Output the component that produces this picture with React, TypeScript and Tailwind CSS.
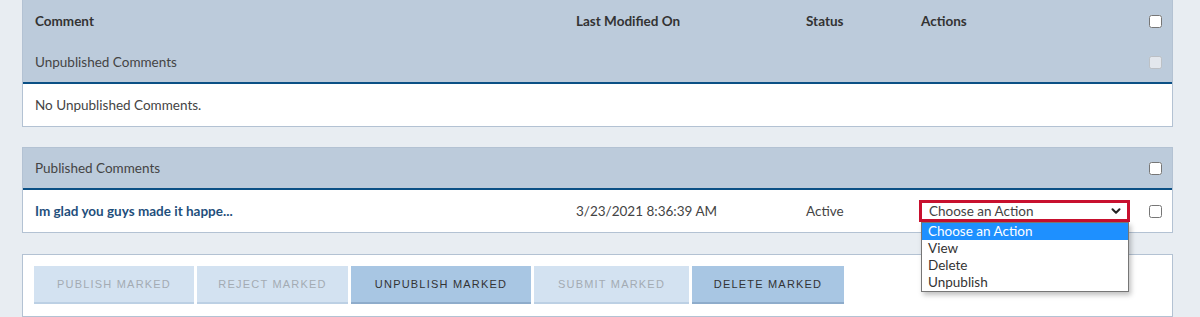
import { ChevronDown } from 'lucide-react';

const font = { fontFamily: 'Lato, "Noto Sans", sans-serif' };

const gridCols = 'grid grid-cols-[541px_230px_115px_1fr_13px] items-center pl-3 pr-[10px]';

function Checkbox({ disabled }: { disabled?: boolean }) {
  return (
    <input
      type="checkbox"
      disabled={disabled}
      className="m-0 h-[13px] w-[13px]"
      readOnly
    />
  );
}

function ActionSelect() {
  return (
    <div className="relative -ml-[2px] w-[211px]">
      <div className="flex h-[22px] items-center justify-between border-[3px] border-[#c8102e] bg-white pl-[7px] pr-[4px] text-[13.5px] text-[#444]">
        <span>Choose an Action</span>
        <ChevronDown className="h-[14px] w-[14px] text-[#222]" strokeWidth={3.5} />
      </div>
      <ul className="absolute left-[2px] top-full z-10 w-[208px] border border-[#767676] bg-white text-[13.5px] leading-[17px] text-[#333] shadow-[2px_3px_5px_rgba(0,0,0,0.25)]">
        <li className="bg-[#1e90ff] pl-[6px] text-white">Choose an Action</li>
        <li className="pl-[6px]">View</li>
        <li className="pl-[6px]">Delete</li>
        <li className="pl-[6px]">Unpublish</li>
      </ul>
    </div>
  );
}

const buttons = [
  { label: 'PUBLISH MARKED', on: false, w: 'w-[160px]' },
  { label: 'REJECT MARKED', on: false, w: 'w-[151px]' },
  { label: 'UNPUBLISH MARKED', on: true, w: 'w-[180px]' },
  { label: 'SUBMIT MARKED', on: false, w: 'w-[155px]' },
  { label: 'DELETE MARKED', on: true, w: 'w-[152px]' },
];

export default function App() {
  return (
    <div className="min-h-[317px] bg-[#e8edf2] px-[22px] pr-[27px]" style={font}>
      {/* unpublished table */}
      <div className="border border-t-0 border-[#b3c2d3] bg-white">
        <div className={`${gridCols} h-[42px] bg-[#bccbdb] text-[13.5px] font-bold text-[#333]`}>
          <span>Comment</span>
          <span>Last Modified On</span>
          <span>Status</span>
          <span>Actions</span>
          <Checkbox />
        </div>
        <div className={`${gridCols} h-[42px] border-b-2 border-[#0b5085] bg-[#bccbdb] text-[13.5px] text-[#444]`}>
          <span className="col-span-4">Unpublished Comments</span>
          <Checkbox disabled />
        </div>
        <div className="flex h-[42px] items-center pl-3 text-[13.5px] text-[#444]">No Unpublished Comments.</div>
      </div>

      {/* published table */}
      <div className="mt-[20px] border border-[#b3c2d3] bg-white">
        <div className={`${gridCols} h-[42px] border-b-2 border-[#0b5085] bg-[#bccbdb] text-[13.5px] text-[#444]`}>
          <span className="col-span-4">Published Comments</span>
          <Checkbox />
        </div>
        <div className={`${gridCols} h-[42px] text-[13.5px] text-[#444]`}>
          <span className="font-bold text-[#1f4f7c]">Im glad you guys made it happe...</span>
          <span>3/23/2021 8:36:39 AM</span>
          <span>Active</span>
          <ActionSelect />
          <Checkbox />
        </div>
      </div>

      {/* bulk buttons */}
      <div className="mt-[21px] flex h-[63px] gap-[3px] border border-[#b3c2d3] bg-white pl-[11px] pt-[11px]">
        {buttons.map((b) => (
          <button
            key={b.label}
            className={`${b.w} h-[38px] border-b-2 text-[11px] tracking-[1.2px] ${
              b.on
                ? 'border-[#8eaccb] bg-[#a8c6e3] text-[#333]'
                : 'border-[#bcd0e4] bg-[#d3e2f1] text-[#a3abb3]'
            }`}
            style={{ fontFamily: '"Liberation Sans", Arial, sans-serif' }}
          >
            {b.label}
          </button>
        ))}
      </div>
    </div>
  );
}
